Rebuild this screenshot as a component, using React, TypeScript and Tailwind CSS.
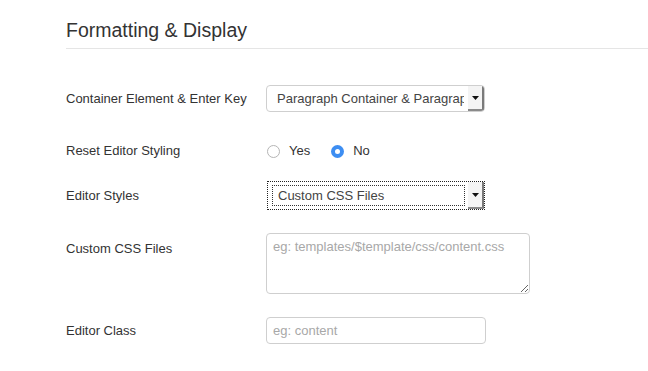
import React from "react";

function Arrow() {
  return (
    <div className="absolute right-0 top-0 bottom-0 w-[16px] bg-[#f4f4f4] border-r-2 border-b-2 border-r-[#7a7a7a] border-b-[#8a8a8a] flex items-center justify-center">
      <svg width="7" height="4" viewBox="0 0 7 4">
        <path d="M0 0 L7 0 L3.5 4 Z" fill="#111" />
      </svg>
    </div>
  );
}

export default function App() {
  const font = { fontFamily: '"Liberation Sans", Arial, Helvetica, sans-serif' };
  return (
    <div className="w-[648px] h-[371px] bg-white overflow-hidden text-[#333]" style={font}>
      <div className="pl-[66px]">
        <div className="pt-[18px] pb-[6px] border-b border-[#e5e5e5] text-[19.5px] leading-[24px] text-[#333]">
          Formatting &amp; Display
        </div>

        <div className="mt-[36px] flex items-center h-[27px]">
          <div className="w-[200px] text-[13px]">Container Element &amp; Enter Key</div>
          <div className="relative w-[219px] h-[27px] border border-[#cfcfcf] rounded-[4px] bg-white overflow-hidden">
            <div className="absolute left-[10px] top-0 bottom-0 right-[20px] overflow-hidden whitespace-nowrap flex items-center text-[13px] text-[#444]">
              Paragraph Container &amp; Paragraph
            </div>
            <Arrow />
          </div>
        </div>

        <div className="mt-[29px] flex items-center h-[20px]">
          <div className="w-[200px] text-[13px]">Reset Editor Styling</div>
          <div className="flex items-center text-[13px] text-[#333]">
            <span className="w-[13px] h-[13px] rounded-full border border-[#b5b5b5] bg-white ml-[1px]" />
            <span className="ml-[9px]">Yes</span>
            <span className="ml-[21px] w-[13px] h-[13px] rounded-full bg-[#3d8ef2] flex items-center justify-center">
              <span className="w-[5px] h-[5px] rounded-full bg-white" />
            </span>
            <span className="ml-[9px]">No</span>
          </div>
        </div>

        <div className="mt-[20px] flex items-center h-[29px]">
          <div className="w-[200px] text-[13px]">Editor Styles</div>
          <div className="relative ml-[1px] w-[218px] h-[29px] border border-dotted border-[#222] bg-white">
            <div className="absolute left-[4px] top-[3px] bottom-[3px] right-[19px] border border-dotted border-[#333] flex items-center pl-[5px] text-[13px] text-[#444] whitespace-nowrap overflow-hidden">
              Custom CSS Files
            </div>
            <Arrow />
          </div>
        </div>

        <div className="mt-[23px] flex items-start">
          <div className="w-[200px] text-[13px] pt-[6px]">Custom CSS Files</div>
          <textarea
            className="w-[264px] h-[61px] border border-[#cfcfcf] rounded-[4px] px-[6px] py-[4px] text-[13px] leading-[18px] placeholder:text-[#a8a8a8] outline-none"
            style={font}
            placeholder="eg: templates/$template/css/content.css"
          />
        </div>

        <div className="mt-[23px] flex items-center h-[27px]">
          <div className="w-[200px] text-[13px]">Editor Class</div>
          <input
            className="w-[220px] h-[27px] border border-[#cfcfcf] rounded-[4px] px-[6px] text-[13px] placeholder:text-[#a8a8a8] outline-none"
            style={font}
            placeholder="eg: content"
          />
        </div>
      </div>
    </div>
  );
}
